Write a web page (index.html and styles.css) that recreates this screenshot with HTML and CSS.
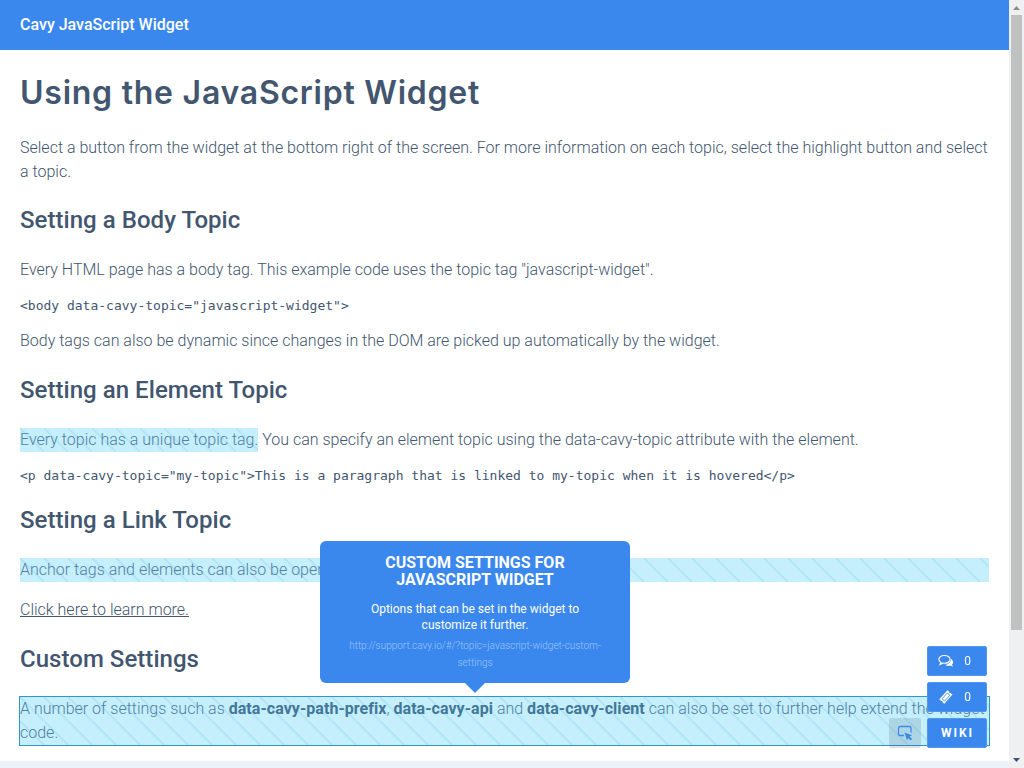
FILE: index.html
```html
<!DOCTYPE html>
<html lang="en">
<head>
<meta charset="utf-8">
<title>Cavy JavaScript Widget</title>
<link rel="stylesheet" href="styles.css">
</head>
<body>
<div class="window">
  <div class="page">
    <header class="topbar">Cavy JavaScript Widget</header>
    <main class="content">
      <h1>Using the JavaScript Widget</h1>
      <p>Select a button from the widget at the bottom right of the screen. For more information on each topic, select the highlight button and select a topic.</p>
      <h2 class="first">Setting a Body Topic</h2>
      <p>Every HTML page has a body tag. This example code uses the topic tag "javascript-widget".</p>
      <pre>&lt;body data-cavy-topic="javascript-widget"&gt;</pre>
      <p>Body tags can also be dynamic since changes in the DOM are picked up automatically by the widget.</p>
      <h2>Setting an Element Topic</h2>
      <p><span class="topic">Every topic has a unique topic tag.</span> You can specify an element topic using the data-cavy-topic attribute with the element.</p>
      <pre>&lt;p data-cavy-topic="my-topic"&gt;This is a paragraph that is linked to my-topic when it is hovered&lt;/p&gt;</pre>
      <h2>Setting a Link Topic</h2>
      <p class="topic">Anchor tags and elements can also be opened</p>
      <p><a href="#">Click here to learn more.</a></p>
      <h2>Custom Settings</h2>
      <div class="topic active">A number of settings such as <b>data-cavy-path-prefix</b>, <b>data-cavy-api</b> and <b>data-cavy-client</b> can also be set to further help extend the widget code.
        <aside class="tooltip">
          <h3>Custom Settings for JavaScript Widget</h3>
          <div class="desc">Options that can be set in the widget to customize it further.</div>
          <div class="url">http://support.cavy.io/#/?topic=javascript-widget-custom-settings</div>
        </aside>
      </div>
    </main>
  </div>
  <div class="scrollbar">
    <svg width="15" height="15"><path d="M4 10h7L7.500 6z" fill="#8b8b8d"/></svg>
    <div class="thumb"></div>
    <svg width="15" height="15"><path d="M4 5h7L7.500 9z" fill="#40546d"/></svg>
  </div>
</div>
<div class="widget">
  <div class="btn"><svg width="16" height="14" viewBox="0 0 16 14"><path d="M7 10.800c1.500 1.300 3.500 1.300 5 .7l2.900 1.300-.9-2.200C15.900 9 15.300 6 12.900 4.900 13 8.300 10.500 10.300 7 10.800z" fill="#fff"/><path d="M6.200 1.500C2.800 1.500 .9 3.300 .9 5.300c0 1.400.8 2.400 2 3.100L2.100 10.300l2.800-1.200c4.600.7 7.200-1.400 7.200-3.800C12.100 3.100 9.600 1.500 6.200 1.500z" fill="#3a87ee" stroke="#fff" stroke-width="1.200"/></svg><span>0</span></div>
  <div class="btn"><svg width="16" height="14" viewBox="0 0 16 14"><path d="M9.500 .2l1.800 1.500c-.4.800.4 1.600 1.300 1.200l1.900 1.700-8.200 9.200-1.800-1.500c.4-.9-.4-1.700-1.300-1.300L1.300 9.300z" fill="#fff"/><path d="M9.300 3l2.500 2.300-5.300 5.800L4 8.800z" fill="#fff" stroke="#3a87ee" stroke-width=".9"/></svg><span>0</span></div>
  <div class="row">
    <div class="pick"><svg width="18" height="18" viewBox="0 0 18 18"><path d="M8 11.500H4A1.500 1.500 0 0 1 2.500 10V4A1.500 1.500 0 0 1 4 2.500h9.500A1.500 1.500 0 0 1 15 4v4.500" fill="none" stroke="#3a87ee" stroke-width="1.300"/><path d="M8.500 8.500l7.500 2.800-2.400 1.300 2.500 2.500-1.500 1.500-2.500-2.500-1.100 2.400z" fill="#3a87ee"/></svg></div>
    <div class="btn wiki">WIKI</div>
  </div>
</div>
</body>
</html>
```
FILE: styles.css
```css
* { box-sizing: border-box; }
body { margin: 0; background: #ebf2f8; color: #42566f; font: 300 16px/24px Roboto, sans-serif; overflow: hidden; }
.window { display: flex; height: 768px; }
.page { width: 1009px; height: 761px; background: #fff; }
.topbar { height: 50px; padding: 0 20px; background: #3a87ee; color: #fff; font-weight: 500; line-height: 50px; }
.content { padding: 22px 20px 0; }
h1 { margin: 0 0 22px; font: 600 32px/42px Inter, sans-serif; letter-spacing: .75px; }
h2 { margin: 22px 0 23px; font-size: 24px; line-height: 30px; font-weight: 500; letter-spacing: .04px; }
h2.first { margin-top: 21px; }
p { margin: 0 0 16px; }
pre { margin: 0 0 15px; font: 400 13px/16px "DejaVu Sans Mono", monospace; }
pre + h2 { margin-top: 21px; }
a { color: inherit; text-decoration: underline; }
b { font-weight: 700; color: #437798; letter-spacing: .05px; }
.topic { background: linear-gradient(45deg, transparent 47%, #b2e5f7 48%, #b2e5f7 52%, transparent 53%) 0 0 / 24px 24px #c5effc; color: #527fa2; }
span.topic { display: inline-block; }
.active { position: relative; outline: 1px solid #3096cc; }
.tooltip { position: absolute; left: 300px; bottom: 62px; width: 310px; height: 142px; padding: 13px 20px 0; border-radius: 6px; background: #3a87ee; color: #fff; text-align: center; }
.tooltip::after { content: ""; position: absolute; left: 145px; top: 142px; border: 10px solid transparent; border-top-color: #3a87ee; border-bottom: 0; }
.tooltip h3 { margin: 0 30px 13px; font-size: 16px; line-height: 17px; font-weight: 700; text-transform: uppercase; }
.desc { padding: 0 25px; font-size: 12px; line-height: 16px; font-weight: 400; }
.url { margin-top: 4px; font-size: 10px; line-height: 17px; color: #9cc6fa; }
.scrollbar { display: flex; flex-direction: column; justify-content: space-between; width: 15px; height: 768px; background: #eef0f2; }
.scrollbar svg { display: block; }
.thumb { width: 11px; height: 615px; margin: 0 2px 123px; background: #c0c2c1; }
.widget { position: fixed; right: 37px; bottom: 20px; display: flex; flex-direction: column; align-items: flex-end; gap: 6px; }
.row { display: flex; gap: 6px; }
.btn { display: flex; align-items: center; justify-content: space-between; width: 60px; height: 30px; padding: 0 15px 0 10px; border: 1px solid #5297ee; border-radius: 2px; background: #3a87ee; color: #fff; font-size: 12px; font-weight: 400; }
.wiki { justify-content: center; padding: 0 0 0 1px; font-weight: 700; letter-spacing: 2px; }
.pick { display: flex; align-items: center; justify-content: center; width: 32px; height: 30px; border-radius: 2px; background: rgba(66, 86, 111, .17); }
```
